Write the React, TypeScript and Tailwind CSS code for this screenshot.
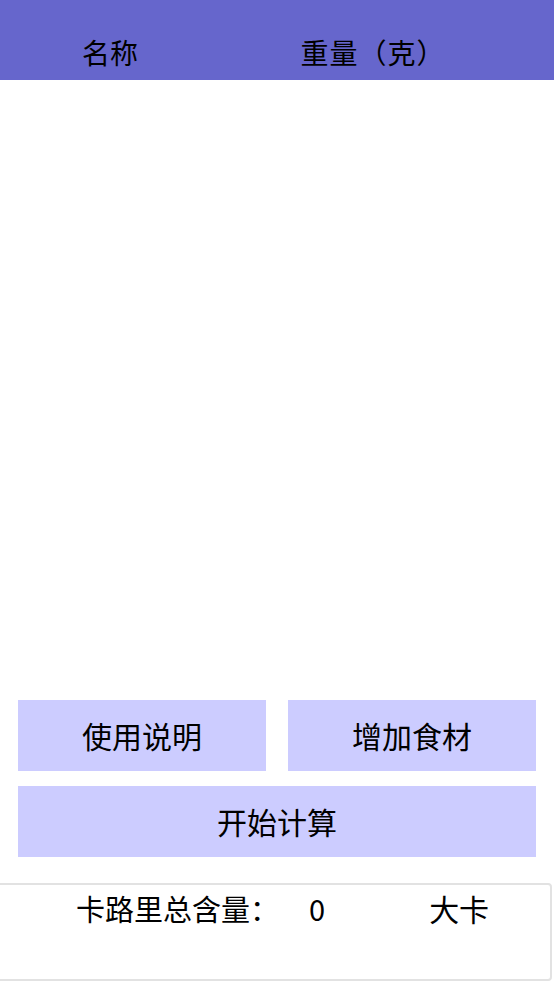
export default function App() {
  const font = { fontFamily: '"Noto Sans CJK SC", Roboto, sans-serif' };

  return (
    <div className="w-[554px] h-[984px] bg-white flex flex-col overflow-hidden text-black" style={font}>
      {/* header */}
      <div className="h-[80px] bg-[#6666cc] flex items-end pb-[10px] text-[28px] leading-[36px]">
        <div className="w-[220px] text-center">名称</div>
        <div className="w-[306px] text-center tracking-[1px]">重量（克）</div>
      </div>

      {/* list area */}
      <div className="flex-1" />

      {/* buttons */}
      <div className="px-[18px] flex flex-col gap-[15px]">
        <div className="flex gap-[22px]">
          <button className="flex-1 h-[71px] bg-[#ccccff] text-[30px]">使用说明</button>
          <button className="flex-1 h-[71px] bg-[#ccccff] text-[30px]">增加食材</button>
        </div>
        <button className="h-[71px] bg-[#ccccff] text-[30px]">开始计算</button>
      </div>

      {/* total */}
      <div className="mt-[26px] mb-[3px] ml-[-4px] w-[556px] h-[98px] border-2 border-[#e2e2e2] rounded-[4px] flex items-start pt-[3px] text-[29px] leading-[40px]">
        <span className="ml-[78px]">卡路里总含量：</span>
        <span className="ml-[30px]">0</span>
        <span className="ml-[104px] text-[30px]">大卡</span>
      </div>
    </div>
  );
}
